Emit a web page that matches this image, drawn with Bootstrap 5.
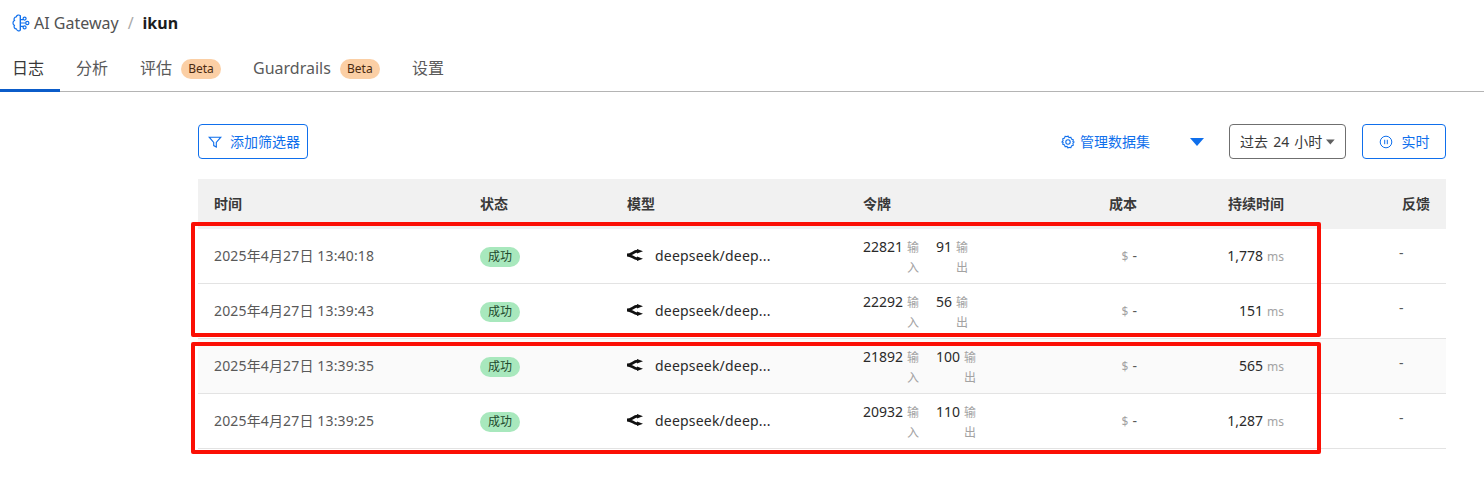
<!DOCTYPE html>
<html lang="zh-CN">
<head>
    <meta charset="UTF-8">
    <title>AI Gateway - ikun</title>
    <link href="https://cdn.jsdelivr.net/npm/bootstrap@5.3.0/dist/css/bootstrap.min.css" rel="stylesheet">
    <style>
        body {
            height: 479px;
            overflow: hidden;
            font-family: "Noto Sans", "Noto Sans CJK SC", sans-serif;
            font-size: 14px;
            color: #393939;
            background: #fff;
        }
        .crumb-bar { height: 46px; padding-left: 12px; font-size: 16px; color: #525252; }
        .crumb-logo { width: 18px; height: 18px; margin-right: 4px; }
        .crumb-sep { color: #a9a9a9; margin: 0 9px; }
        .crumb-name { color: #1c1c1c; font-weight: 700; }
        .tab-bar { height: 46px; border-bottom: 1px solid #b4b4b4; }
        .tab-item {
            height: 46px;
            padding: 0 16px;
            font-size: 16px;
            color: #5a5a5a;
            text-decoration: none;
            border-bottom: 3px solid transparent;
        }
        .tab-active { color: #393939; border-bottom-color: #0b5cc9; padding-left: 12px; }
        .beta-pill {
            width: 40px;
            text-align: center;
            background: #fbcfa5;
            color: #4a2a10;
            font-size: 12px;
            line-height: 20px;
            border-radius: 10px;
            margin-left: 9px;
            margin-top: 2px;
        }
        .log-area { padding: 32px 38px 0 198px; }
        .tool-row { height: 35px; margin-bottom: 20px; }
        .btn-line {
            height: 35px;
            border: 1px solid #0f6fec;
            border-radius: 4px;
            color: #0f6fec;
            background: #fff;
            font-size: 14px;
            padding: 0;
        }
        .btn-filter { width: 110px; padding-left: 9px; gap: 8px; }
        .btn-live { width: 84px; margin-left: 16px; gap: 9px; }
        .data-link { color: #0f6fec; font-size: 14px; gap: 5px; }
        .data-caret { width: 14px; height: 8px; margin: 0 25px 0 40px; }
        .range-box {
            width: 117px;
            height: 35px;
            border: 1px solid #6f6f6f;
            border-radius: 4px;
            padding: 0 10px;
            font-size: 14px;
            word-spacing: 1.5px;
            color: #393939;
            white-space: nowrap;
        }
        .range-caret { width: 10px; height: 6px; margin-left: 4px; }
        .log-table { table-layout: fixed; width: 1248px; margin: 0; border-collapse: separate; border-spacing: 0; }
        .log-table > :not(caption) > * > * { padding: 0 16px; vertical-align: middle; box-shadow: none; color: #595959; background: transparent; }
        .log-table thead th {
            height: 50px;
            padding-bottom: 2px;
            background: #f1f1f1;
            color: #393939;
            font-size: 14px;
            font-weight: 700;
            border: 0;
        }
        .log-table tbody td { height: 55px; padding-bottom: 2px; border-bottom: 1px solid #e3e3e3; font-size: 14px; }
        .log-table tbody tr.row-hover > td { background: #fafafa; }
        .col-time { width: 266px; }
        .col-state { width: 147px; }
        .col-model { width: 236px; }
        .col-token { width: 206px; }
        .col-cost { width: 100px; }
        .col-dur { width: 147px; }
        .col-back { width: 146px; }
        .time-text { letter-spacing: .15px; }
        .log-table tbody td.state-cell { padding-bottom: 0; }
        .state-pill {
            display: block;
            width: 40px;
            height: 20px;
            margin-top: 2px;
            line-height: 20px;
            text-align: center;
            border-radius: 10px;
            background: #a8e8bd;
            color: #1f4a2d;
            font-size: 12px;
        }
        .model-icon { width: 16px; height: 12px; margin-right: 12px; }
        .model-name { color: #2a2a2a; letter-spacing: .2px; }
        .log-table tbody td.token-cell { padding-top: 2px; padding-bottom: 0; line-height: 20px; }
        .token-num { color: #2a2a2a; margin-right: 4px; }
        .token-unit { display: inline-block; width: 13px; margin-top: 1px; font-size: 12px; line-height: 20px; color: #a3a3a3; word-break: break-all; }
        .token-gap { margin-left: 16px; }
        .cost-sign { color: #a3a3a3; font-size: 12px; margin-right: 4px; }
        .dur-num { color: #2a2a2a; }
        .dur-unit { color: #a3a3a3; font-size: 12px; margin-left: 4px; }
        .log-table tbody td.back-cell { padding-left: 99px; padding-bottom: 8px; }
        .note-box { position: absolute; left: 191px; width: 1130px; border: 4px solid #fb0f05; border-radius: 2px; pointer-events: none; }
        .note-one { top: 222px; height: 115px; }
        .note-two { top: 342px; height: 112px; }
    </style>
</head>
<body>
    <div class="crumb-bar d-flex align-items-center">
        <svg class="crumb-logo" viewBox="0 0 18 18" fill="none" stroke="#0f6fec" stroke-width="1.2">
            <path d="M8.4 1.8C7 .4 4.6 1 4.3 2.8 2.3 3 1.4 5 2.5 6.4.5 7.4.5 10.4 2.4 11.4c-1 1.8.3 3.7 2.1 3.6.4 2 2.9 2.6 3.9 1z"/>
            <path d="M8.4 1.8V16M8.4 5.6h2.8M8.4 9h5.2M8.4 12.4h2.8"/>
            <circle cx="12.6" cy="4.6" r="1.5"/><circle cx="15.3" cy="9" r="1.6"/><circle cx="12.6" cy="13.4" r="1.5"/>
        </svg>
        <span>AI Gateway</span><span class="crumb-sep">/</span><span class="crumb-name">ikun</span>
    </div>

    <nav class="tab-bar d-flex">
        <a class="tab-item tab-active d-flex align-items-center" href="#">日志</a>
        <a class="tab-item d-flex align-items-center" href="#">分析</a>
        <a class="tab-item d-flex align-items-center" href="#">评估<span class="beta-pill">Beta</span></a>
        <a class="tab-item d-flex align-items-center" href="#">Guardrails<span class="beta-pill">Beta</span></a>
        <a class="tab-item d-flex align-items-center" href="#">设置</a>
    </nav>

    <div class="log-area">
        <div class="tool-row d-flex align-items-center">
            <button class="btn-line btn-filter d-flex align-items-center" type="button">
                <svg width="14" height="14" viewBox="0 0 14 14" fill="none" stroke="#0f6fec" stroke-width="1.1"><path d="M1.2 2.2h11.6L8.3 7.4v4.6L5.7 10.6V7.4z"/></svg>
                添加筛选器
            </button>
            <div class="data-link d-flex align-items-center ms-auto">
                <svg width="14" height="14" viewBox="0 0 14 14" fill="none" stroke="#0f6fec" stroke-width="1.1"><path d="M7 1l1 1.6 1.9-.3.6 1.8 1.8.7-.4 1.9L13 7l-1.1 1.3.4 1.9-1.8.7-.6 1.8-1.9-.3L7 13l-1-1.6-1.9.3-.6-1.8-1.8-.7.4-1.9L1 7l1.1-1.3-.4-1.9 1.8-.7.6-1.8 1.9.3z"/><circle cx="7" cy="7" r="2.2"/></svg>
                管理数据集
            </div>
            <svg class="data-caret" viewBox="0 0 14 8"><path d="M0 0h14L7 8z" fill="#0f6fec"/></svg>
            <div class="range-box d-flex align-items-center">
                过去 24 小时
                <svg class="range-caret" viewBox="0 0 10 6"><path d="M0 0h10L5 6z" fill="#5f5f5f"/></svg>
            </div>
            <button class="btn-line btn-live d-flex align-items-center justify-content-center" type="button">
                <svg width="14" height="14" viewBox="0 0 14 14" fill="none" stroke="#0f6fec" stroke-width="1"><circle cx="7" cy="7" r="5.8"/><path d="M5.7 4.8v4.4M8.3 4.8v4.4"/></svg>
                实时
            </button>
        </div>

        <table class="table log-table">
            <colgroup>
                <col class="col-time"><col class="col-state"><col class="col-model"><col class="col-token"><col class="col-cost"><col class="col-dur"><col class="col-back">
            </colgroup>
            <thead>
                <tr>
                    <th>时间</th><th>状态</th><th>模型</th><th>令牌</th>
                    <th class="text-end">成本</th><th class="text-end">持续时间</th><th class="text-end">反馈</th>
                </tr>
            </thead>
            <tbody id="logRows"></tbody>
        </table>
    </div>

    <div class="note-box note-one"></div>
    <div class="note-box note-two"></div>

    <script src="https://cdn.jsdelivr.net/npm/bootstrap@5.3.0/dist/js/bootstrap.bundle.min.js"></script>
    <script>
        const logs = [
            ['2025年4月27日 13:40:18', '22821', '91', '1,778'],
            ['2025年4月27日 13:39:43', '22292', '56', '151'],
            ['2025年4月27日 13:39:35', '21892', '100', '565'],
            ['2025年4月27日 13:39:25', '20932', '110', '1,287']
        ];
        const modelIcon = '<svg class="model-icon" viewBox="0 0 16 12"><path d="M0 6C5 6 6 2.4 10.5 2.2M0 6C5 6 6 9.6 10.5 9.8" fill="none" stroke="#111" stroke-width="2.8"/><path d="M10 0l6 2.2L10 4.6zM10 7.4l6 2.4L10 12z" fill="#111"/></svg>';
        document.getElementById('logRows').innerHTML = logs.map(function (log, i) {
            return '<tr class="' + (i === 2 ? 'row-hover' : '') + '">' +
                '<td><span class="time-text">' + log[0] + '</span></td>' +
                '<td class="state-cell"><span class="state-pill">成功</span></td>' +
                '<td><div class="d-flex align-items-center">' + modelIcon + '<span class="model-name">deepseek/deep...</span></div></td>' +
                '<td class="token-cell"><div class="d-flex align-items-start">' +
                    '<span class="token-num">' + log[1] + '</span><span class="token-unit">输入</span>' +
                    '<span class="token-num token-gap">' + log[2] + '</span><span class="token-unit">输出</span>' +
                '</div></td>' +
                '<td class="text-end"><span class="cost-sign">$</span>-</td>' +
                '<td class="text-end"><span class="dur-num">' + log[3] + '</span><span class="dur-unit">ms</span></td>' +
                '<td class="back-cell">-</td>' +
                '</tr>';
        }).join('');
    </script>
</body>
</html>
